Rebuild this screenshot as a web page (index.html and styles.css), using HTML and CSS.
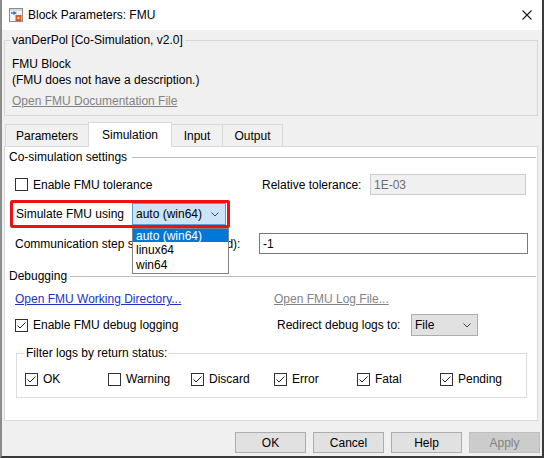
FILE: index.html
```html
<!DOCTYPE html>
<html>
<head>
<meta charset="utf-8">
<title>Block Parameters: FMU</title>
<link rel="stylesheet" href="styles.css">
</head>
<body>
<div class="window">
  <div class="titlebar">
    <svg class="app-icon" viewBox="0 0 14 14" width="14" height="14">
      <rect x="0.5" y="0.5" width="13" height="13" fill="#f4f4f4" stroke="#8a8a8a"/>
      <rect x="1" y="1" width="12" height="2" fill="#d8d8d8"/>
      <path d="M2 5 H5" stroke="#2a6fc9" stroke-width="1.4"/>
      <path d="M4.5 3 L8 5 L4.5 7 Z" fill="#2a6fc9"/>
      <rect x="6.5" y="7" width="6" height="6" fill="#e0561f"/>
      <rect x="8.5" y="9" width="2" height="2" fill="#ffd9c4"/>
    </svg>
    <span class="title">Block Parameters: FMU</span>
    <svg class="close" viewBox="0 0 10 10" width="10" height="10">
      <path d="M0.5 0.5 L9.5 9.5 M9.5 0.5 L0.5 9.5" stroke="#1a1a1a" stroke-width="1.1"/>
    </svg>
  </div>
  <div class="client">
    <fieldset class="info">
      <legend>vanDerPol [Co-Simulation, v2.0]</legend>
      <div class="info-body">
        <div class="line first">FMU Block</div>
        <div class="line">(FMU does not have a description.)</div>
        <a class="link disabled doc">Open FMU Documentation File</a>
      </div>
    </fieldset>

    <div class="tabs">
      <div class="tab tab-params">Parameters</div>
      <div class="tab tab-sim active">Simulation</div>
      <div class="tab tab-input">Input</div>
      <div class="tab tab-output">Output</div>
    </div>

    <div class="panel">
      <div class="section">Co-simulation settings</div>

      <div class="row row-tol">
        <label class="check w-tol">
          <span class="box"></span>
          <span>Enable FMU tolerance</span>
        </label>
        <span class="lbl-tol">Relative tolerance:</span>
        <span class="input disabled-input tol-input">1E-03</span>
      </div>

      <div class="highlight">
        <span class="lbl-sim">Simulate FMU using</span>
        <span class="combo focused">
          <span class="combo-text">auto (win64)</span>
          <svg class="chev" viewBox="0 0 8 5" width="8" height="5"><polyline points="0.5,0.5 4,4 7.5,0.5" fill="none" stroke="#444" stroke-width="1"/></svg>
        </span>
        <div class="listbox">
          <div class="opt opt1 selected">auto (win64)</div>
          <div class="opt opt2">linux64</div>
          <div class="opt opt3">win64</div>
        </div>
      </div>

      <div class="row row-comm">
        <span class="lbl-comm">Communication step size (if not specified):</span>
        <span class="input comm-input">-1</span>
      </div>

      <div class="section sec-debug">Debugging</div>

      <div class="row row-links">
        <a class="link active-link w-link">Open FMU Working Directory...</a>
        <a class="link disabled">Open FMU Log File...</a>
      </div>

      <div class="row row-debug">
        <label class="check w-debug">
          <span class="box"><svg viewBox="0 0 11 11" width="11" height="11"><polyline points="1.5,5.5 4,8 9.5,2.5" fill="none" stroke="#222" stroke-width="1"/></svg></span>
          <span>Enable FMU debug logging</span>
        </label>
        <span class="lbl-redirect">Redirect debug logs to:</span>
        <span class="combo plain">
          <span class="combo-text">File</span>
          <svg class="chev" viewBox="0 0 8 5" width="8" height="5"><polyline points="0.5,0.5 4,4 7.5,0.5" fill="none" stroke="#444" stroke-width="1"/></svg>
        </span>
      </div>

      <fieldset class="filter">
        <legend>Filter logs by return status:</legend>
        <div class="checks">
          <label class="check"><span class="box"><svg viewBox="0 0 11 11" width="11" height="11"><polyline points="1.5,5.5 4,8 9.5,2.5" fill="none" stroke="#222" stroke-width="1"/></svg></span><span>OK</span></label>
          <label class="check"><span class="box"></span><span>Warning</span></label>
          <label class="check"><span class="box"><svg viewBox="0 0 11 11" width="11" height="11"><polyline points="1.5,5.5 4,8 9.5,2.5" fill="none" stroke="#222" stroke-width="1"/></svg></span><span>Discard</span></label>
          <label class="check"><span class="box"><svg viewBox="0 0 11 11" width="11" height="11"><polyline points="1.5,5.5 4,8 9.5,2.5" fill="none" stroke="#222" stroke-width="1"/></svg></span><span>Error</span></label>
          <label class="check"><span class="box"><svg viewBox="0 0 11 11" width="11" height="11"><polyline points="1.5,5.5 4,8 9.5,2.5" fill="none" stroke="#222" stroke-width="1"/></svg></span><span>Fatal</span></label>
          <label class="check"><span class="box"><svg viewBox="0 0 11 11" width="11" height="11"><polyline points="1.5,5.5 4,8 9.5,2.5" fill="none" stroke="#222" stroke-width="1"/></svg></span><span>Pending</span></label>
        </div>
      </fieldset>
    </div>

    <div class="buttons">
      <button class="btn">OK</button>
      <button class="btn">Cancel</button>
      <button class="btn">Help</button>
      <button class="btn btn-disabled">Apply</button>
    </div>
  </div>
</div>
</body>
</html>
```

FILE: styles.css
```css
* { box-sizing: border-box; }
html, body { margin: 0; padding: 0; }
body {
  font-family: "Liberation Sans", Arial, sans-serif;
  font-size: 12px;
  color: #000;
  background: #fff;
}
.window {
  width: 544px;
  height: 458px;
  border-left: 2px solid #8c8c8c;
  border-right: 2px solid #3a3a3a;
  border-bottom: 2px solid #3a3a3a;
  background: #f0f0f0;
  display: flex;
  flex-direction: column;
  overflow: hidden;
}
.titlebar {
  height: 30px;
  flex: none;
  background: #fff;
  display: flex;
  align-items: center;
  padding: 0 10px 0 7px;
}
.app-icon { flex: none; display: block; }
.title { margin-left: 5px; flex: 1; line-height: 16px; }
.close { flex: none; display: block; }

.client { flex: 1; display: flex; flex-direction: column; }

fieldset { min-width: 0; }
fieldset legend { line-height: 16px; }

.info {
  margin: 2px 4px 0 2px;
  padding: 0 0 6px 5px;
  border: 1px solid #d6d6d6;
}
.info legend { padding: 0 2px; }
.info-body { padding-left: 2px; }
.line { line-height: 16px; }
.line.first { margin-top: 8px; }
.link { text-decoration: underline; line-height: 16px; cursor: pointer; }
.link.disabled { color: #838383; }
.link.active-link { color: #1a33c6; }
.doc { display: block; margin-top: 5px; }

.tabs {
  height: 30px;
  flex: none;
  display: flex;
  align-items: flex-end;
  margin-left: 3px;
  position: relative;
  z-index: 1;
}
.tab {
  height: 22px;
  border: 1px solid #d9d9d9;
  border-bottom: none;
  background: #f0f0f0;
  display: flex;
  align-items: center;
  justify-content: center;
  line-height: 16px;
  margin-left: -1px;
}
.tab-params { width: 84px; margin-left: 0; }
.tab-sim { width: 84px; }
.tab-input { width: 52px; }
.tab-output { width: 61px; }
.tab.active {
  height: 25px;
  background: #fff;
  margin-bottom: -1px;
  position: relative;
  z-index: 2;
  padding-bottom: 1px;
}

.panel {
  flex: none;
  height: 275px;
  width: 534px;
  margin-left: 2px;
  background: #fff;
  border: 1px solid #d9d9d9;
  padding-top: 2px;
}
.section {
  display: flex;
  align-items: center;
  line-height: 16px;
  padding-left: 4px;
  margin-right: 1px;
}
.section::after {
  content: "";
  flex: 1;
  height: 1px;
  background: #bdbdbd;
  margin-left: 5px;
}
.sec-debug { margin-top: 14px; }
.sec-debug::after { margin-left: 3px; }

.row {
  display: flex;
  align-items: center;
  padding-left: 10px;
  line-height: 16px;
}
.check { display: flex; align-items: center; gap: 5px; line-height: 16px; }
.box {
  width: 13px;
  height: 13px;
  flex: none;
  border: 1px solid #333;
  background: #fff;
  display: flex;
}
.box svg { display: block; }

.row-tol { margin-top: 9px; height: 21px; }
.w-tol { width: 247px; }
.lbl-tol { width: 108px; }
.input {
  height: 21px;
  display: flex;
  align-items: center;
  padding-left: 3px;
  border: 1px solid #7a7a7a;
  background: #fff;
}
.tol-input { width: 156px; }
.disabled-input { background: #f0f0f0; border-color: #cccccc; color: #6d6d6d; }

.highlight {
  position: relative;
  margin: 5px 0 0 5px;
  width: 220px;
  height: 28px;
  border: 3px solid #ee1111;
  border-radius: 2px;
  padding-left: 3px;
  display: flex;
  align-items: center;
  z-index: 3;
}
.lbl-sim { width: 116px; line-height: 16px; }
.combo {
  display: flex;
  align-items: center;
  height: 22px;
  padding: 0 6px 0 3px;
  line-height: 16px;
}
.combo .chev { margin-left: auto; display: block; }
.combo.focused {
  width: 94px;
  background: #cce4f7;
  border: 1px solid #5c9ddd;
}
.combo.plain {
  width: 67px;
  background: #e1e1e1;
  border: 1px solid #adadad;
}
.listbox {
  position: absolute;
  top: 25px;
  left: 119px;
  width: 97px;
  background: #fff;
  border: 1px solid #828282;
}
.opt { padding-left: 3px; display: flex; align-items: center; }
.opt1 { height: 13px; }
.opt2 { height: 15px; }
.opt3 { height: 16px; }
.opt.selected { background: #0078d7; color: #fff; }

.row-comm { margin-top: 5px; height: 21px; }
.lbl-comm { width: 244px; white-space: nowrap; overflow: hidden; }
.comm-input { width: 269px; }

.row-links { margin-top: 7px; height: 16px; }
.w-link { width: 259px; }

.row-debug { margin-top: 7px; height: 22px; }
.w-debug { width: 262px; }
.lbl-redirect { width: 134px; }

.filter {
  margin: 9px 10px 0 11px;
  padding: 0 0 10px 8px;
  border: 1px solid #dcdcdc;
}
.filter legend { padding: 0 1px; }
.checks {
  display: grid;
  grid-template-columns: repeat(6, 83px);
  margin-top: 10px;
  height: 16px;
}

.buttons {
  display: flex;
  justify-content: flex-end;
  gap: 7px;
  margin-top: 11px;
  padding-right: 2px;
}
.btn {
  width: 71px;
  height: 21px;
  margin: 0;
  padding: 0;
  border: 1px solid #adadad;
  background: #e1e1e1;
  font-family: "Liberation Sans", Arial, sans-serif;
  font-size: 12px;
  color: #000;
}
.btn-disabled { background: #cccccc; border-color: #bfbfbf; color: #838383; }
```
